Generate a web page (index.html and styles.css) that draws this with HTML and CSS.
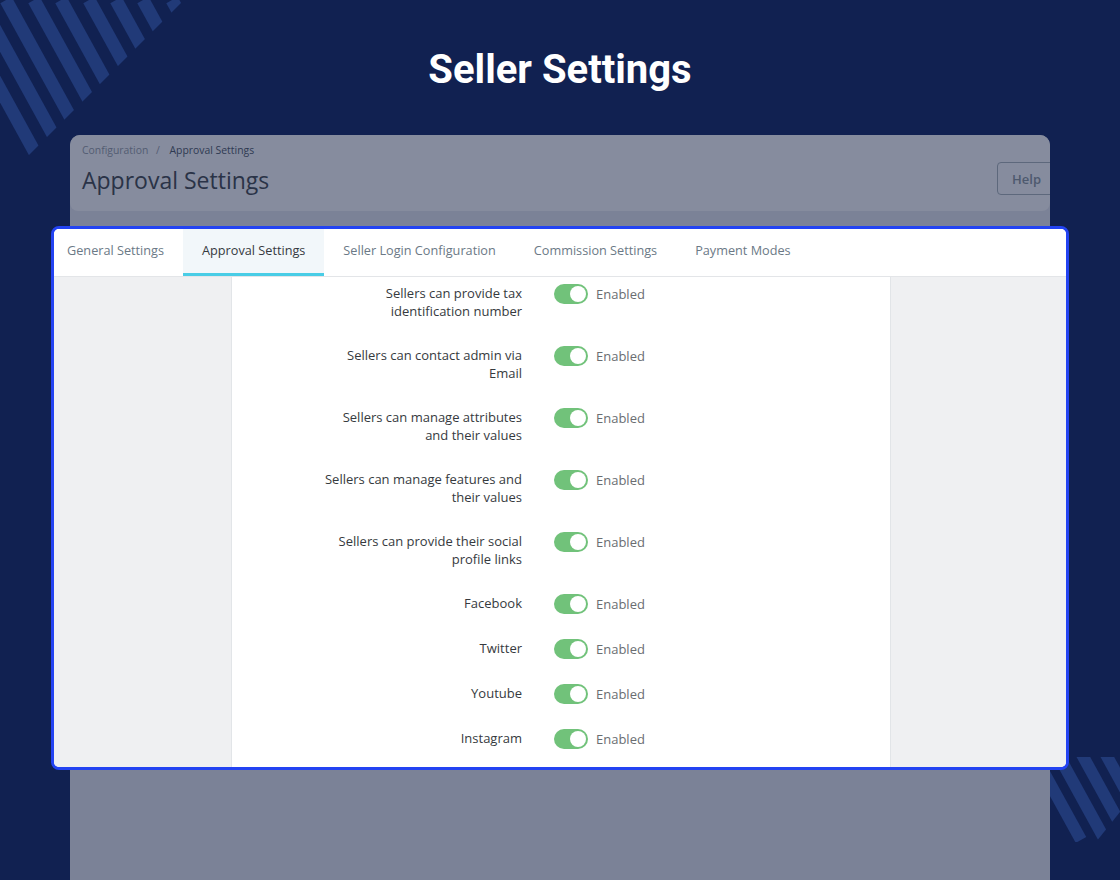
FILE: index.html
```html
<!DOCTYPE html>
<html lang="en">
<head>
    <meta charset="UTF-8">
    <meta name="viewport" content="width=device-width, initial-scale=1.0">
    <title>Seller Settings</title>
    <link rel="stylesheet" href="styles.css">
</head>
<body>
    <svg class="backdrop" width="1120" height="880" viewBox="0 0 1120 880">
        <defs>
            <clipPath id="clipTop"><polygon points="0,0 184,0 0,184"/></clipPath>
            <clipPath id="clipBottom"><polygon points="1040,757 1120,757 1120,812 1096,842 1040,842"/></clipPath>
        </defs>
        <g clip-path="url(#clipTop)" stroke="#213a78" stroke-width="13">
            <line x1="-49" y1="0" x2="61" y2="200"/>
            <line x1="-21" y1="0" x2="89" y2="200"/>
            <line x1="6" y1="0" x2="116" y2="200"/>
            <line x1="34" y1="0" x2="144" y2="200"/>
            <line x1="61" y1="0" x2="171" y2="200"/>
            <line x1="89" y1="0" x2="199" y2="200"/>
            <line x1="116" y1="0" x2="226" y2="200"/>
            <line x1="143" y1="0" x2="253" y2="200"/>
            <line x1="172" y1="0" x2="282" y2="200"/>
        </g>
        <g clip-path="url(#clipBottom)" stroke="#213a78" stroke-width="12">
            <line x1="1026" y1="740" x2="1081" y2="840"/>
            <line x1="1050" y1="740" x2="1105" y2="840"/>
            <line x1="1074" y1="740" x2="1129" y2="840"/>
            <line x1="1098" y1="740" x2="1153" y2="840"/>
            <line x1="1122" y1="740" x2="1177" y2="840"/>
        </g>
    </svg>

    <div class="hero">
        <h1>Seller Settings</h1>
    </div>

    <div class="page">
        <div class="page-head">
            <div class="page-title">
                <div class="crumbs">
                    <span>Configuration</span>
                    <span class="sep">/</span>
                    <span class="here">Approval Settings</span>
                </div>
                <h2>Approval Settings</h2>
            </div>
            <button class="help-btn">Help</button>
        </div>
    </div>

    <div class="modal">
        <div class="tabs">
            <a class="tab">General Settings</a>
            <a class="tab active">Approval Settings</a>
            <a class="tab">Seller Login Configuration</a>
            <a class="tab">Commission Settings</a>
            <a class="tab">Payment Modes</a>
        </div>
        <div class="modal-body">
            <div class="form-panel">
                <div class="form-row">
                    <label>Sellers can provide tax identification number</label>
                    <div class="control"><span class="switch"></span><span class="state">Enabled</span></div>
                </div>
                <div class="form-row">
                    <label>Sellers can contact admin via Email</label>
                    <div class="control"><span class="switch"></span><span class="state">Enabled</span></div>
                </div>
                <div class="form-row">
                    <label>Sellers can manage attributes and their values</label>
                    <div class="control"><span class="switch"></span><span class="state">Enabled</span></div>
                </div>
                <div class="form-row">
                    <label>Sellers can manage features and their values</label>
                    <div class="control"><span class="switch"></span><span class="state">Enabled</span></div>
                </div>
                <div class="form-row">
                    <label>Sellers can provide their social profile links</label>
                    <div class="control"><span class="switch"></span><span class="state">Enabled</span></div>
                </div>
                <div class="form-row">
                    <label>Facebook</label>
                    <div class="control"><span class="switch"></span><span class="state">Enabled</span></div>
                </div>
                <div class="form-row">
                    <label>Twitter</label>
                    <div class="control"><span class="switch"></span><span class="state">Enabled</span></div>
                </div>
                <div class="form-row">
                    <label>Youtube</label>
                    <div class="control"><span class="switch"></span><span class="state">Enabled</span></div>
                </div>
                <div class="form-row">
                    <label>Instagram</label>
                    <div class="control"><span class="switch"></span><span class="state">Enabled</span></div>
                </div>
            </div>
        </div>
    </div>
</body>
</html>
```

FILE: styles.css
```css
* {
    box-sizing: border-box;
}
body {
    margin: 0;
    width: 1120px;
    height: 880px;
    overflow: hidden;
    position: relative;
    background-color: #112151;
    font-family: "Open Sans", sans-serif;
}
.backdrop {
    position: absolute;
    top: 0;
    left: 0;
}
.hero {
    position: relative;
    padding-top: 46px;
    text-align: center;
}
.hero h1 {
    margin: 0;
    font-family: Roboto, sans-serif;
    font-weight: 700;
    font-size: 40px;
    line-height: 48px;
    color: white;
}
.page {
    position: relative;
    margin: 41px 70px 0;
    height: 745px;
    background-color: #7b8297;
    border-radius: 10px 10px 0 0;
    overflow: hidden;
}
.page-head {
    display: flex;
    justify-content: space-between;
    align-items: flex-start;
    height: 76px;
    padding-left: 12px;
    background-color: #868c9e;
    border-radius: 0 0 8px 8px;
}
.crumbs {
    padding-top: 8px;
    font-size: 10.4px;
    line-height: 14px;
    color: #535c72;
}
.crumbs .sep {
    margin: 0 7px 0 5px;
}
.crumbs .here {
    color: #2f3a52;
}
.page-title h2 {
    margin: 7px 0 0;
    font-size: 23px;
    font-weight: 400;
    line-height: 32px;
    color: #2a3347;
}
.help-btn {
    margin-top: 27px;
    margin-right: -6px;
    height: 33px;
    padding: 0 14px;
    background: transparent;
    border: 1px solid #5d687c;
    border-radius: 4px;
    font-family: "Open Sans", sans-serif;
    font-size: 13px;
    font-weight: 600;
    color: #4d596e;
}
.modal {
    position: absolute;
    top: 226px;
    left: 51px;
    width: 1018px;
    height: 544px;
    display: flex;
    flex-direction: column;
    border: 3px solid #2343f2;
    border-radius: 8px;
    background-color: white;
    overflow: hidden;
}
.tabs {
    display: flex;
    height: 48px;
    border-bottom: 1px solid #e3e5e8;
    background-color: white;
}
.tab {
    display: flex;
    align-items: center;
    padding: 0 19px 2px;
    border-bottom: 3px solid transparent;
    font-size: 12.7px;
    color: #6b7986;
    cursor: pointer;
}
.tab:first-child {
    padding-left: 13px;
}
.tab.active {
    background-color: #f2f7fa;
    border-bottom-color: #49cde6;
    color: #363a3f;
}
.modal-body {
    flex: 1;
    background-color: #eff0f2;
    overflow: hidden;
}
.form-panel {
    width: 660px;
    height: 100%;
    margin: 0 auto;
    padding-top: 7px;
    background-color: white;
    border-left: 1px solid #e2e5e8;
    border-right: 1px solid #e2e5e8;
    display: grid;
    align-content: start;
    row-gap: 26px;
    transform: translateX(1px);
}
.form-row {
    display: grid;
    grid-template-columns: 290px 1fr;
    column-gap: 32px;
    align-items: start;
}
.form-row label {
    padding-left: 85px;
    text-align: right;
    font-size: 13px;
    line-height: 18px;
    color: #363a3e;
}
.control {
    display: flex;
    align-items: center;
    height: 19px;
    gap: 8px;
}
.switch {
    position: relative;
    width: 34px;
    height: 20px;
    border-radius: 10px;
    background-color: #71c27a;
}
.switch::after {
    content: "";
    position: absolute;
    top: 2px;
    right: 2px;
    width: 16px;
    height: 16px;
    border-radius: 50%;
    background-color: white;
}
.state {
    font-size: 13px;
    color: #6a6d71;
}
```
